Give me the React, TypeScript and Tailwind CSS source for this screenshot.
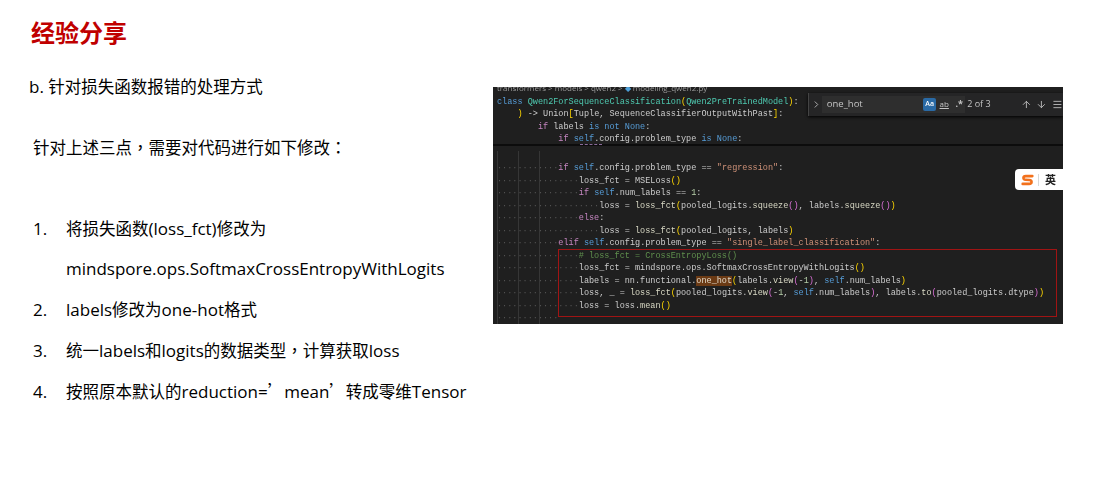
import {ArrowDown, ArrowUp, ChevronRight, Menu} from "lucide-react";
import type {ReactNode} from "react";

const textFont = "font-['Open_Sans','Noto_Sans_CJK_SC',sans-serif]";

const Kw = ({children}: { children: ReactNode }) => <span className="text-[#c586c0]">{children}</span>;
const Blue = ({children}: { children: ReactNode }) => <span className="text-[#569cd6]">{children}</span>;
const Cls = ({children}: { children: ReactNode }) => <span className="text-[#4ec9b0]">{children}</span>;
const Gold = ({children}: { children: ReactNode }) => <span className="text-[#ffd700]">{children}</span>;
const Pink = ({children}: { children: ReactNode }) => <span className="text-[#da70d6]">{children}</span>;
const Str = ({children}: { children: ReactNode }) => <span className="text-[#ce9178]">{children}</span>;
const Fn = ({children}: { children: ReactNode }) => <span className="text-[#d8d8c4]">{children}</span>;
const Num = ({children}: { children: ReactNode }) => <span className="text-[#b5cea8]">{children}</span>;

// latin runs are a touch larger than the CJK around them
const L = ({children}: { children: ReactNode }) => <span className="text-[17px]">{children}</span>;
// full-width punctuation sitting centred in its box
const P = ({children}: { children: ReactNode }) => <span className="font-['Noto_Sans_CJK_TC',sans-serif]">{children}</span>;
const Q = () => <span className="font-['Noto_Sans_CJK_SC',sans-serif]">’</span>;

// render-whitespace dots, one per column
const Dots = ({n}: { n: number }) => <span className="text-[#555555]">{"·".repeat(n)}</span>;

const CodeLine = ({indent = 0, dots = false, children}: { indent?: number; dots?: boolean; children: ReactNode }) => (
    <div className="h-[12.5px] whitespace-pre">
        {dots ? <Dots n={indent}/> : " ".repeat(indent)}
        {children}
    </div>
);

const CodePanel = () => (
    <div className="relative h-[237px] w-[570px] overflow-hidden bg-[#1f1f1f] font-['Liberation_Mono',monospace] text-[8.52px] leading-[12.5px] text-[#cccccc] blur-[0.4px]">
        {/* sticky scroll part */}
        <div className="h-[63px] border-b-2 border-[#0c0c0c] pl-[4px]">
            <div className="-mt-[4px] h-[9px] font-['Open_Sans',sans-serif] text-[8px] leading-[9px] text-[#9a9a9a]">
                transformers &gt; models &gt; qwen2 &gt; <span className="text-[#4d9fd8]">◆</span> modeling_qwen2.py
            </div>
            <div className="mt-[3.5px]">
                <CodeLine><Blue>class</Blue> <Cls>Qwen2ForSequenceClassification</Cls><Gold>(</Gold><Cls>Qwen2PreTrainedModel</Cls><Gold>)</Gold>:</CodeLine>
                <CodeLine indent={4}><Gold>)</Gold> -&gt; Union<Gold>[</Gold>Tuple, SequenceClassifierOutputWithPast<Gold>]</Gold>:</CodeLine>
                <CodeLine indent={8}><Kw>if</Kw> labels <Blue>is not None</Blue>:</CodeLine>
                <CodeLine indent={12}><Kw>if</Kw> <Blue>self</Blue>.config.problem_type <Blue>is None</Blue>:</CodeLine>
            </div>
        </div>
        {/* main editor */}
        <div className="mt-[16px] pl-[4px]">
            <CodeLine dots indent={12}><Kw>if</Kw> <Blue>self</Blue>.config.problem_type == <Str>"regression"</Str>:</CodeLine>
            <CodeLine dots indent={16}>loss_fct = MSELoss<Gold>()</Gold></CodeLine>
            <CodeLine dots indent={16}><Kw>if</Kw> <Blue>self</Blue>.num_labels == <Num>1</Num>:</CodeLine>
            <CodeLine dots indent={20}>loss = <Fn>loss_fct</Fn><Gold>(</Gold>pooled_logits.<Fn>squeeze</Fn><Pink>()</Pink>, labels.<Fn>squeeze</Fn><Pink>()</Pink><Gold>)</Gold></CodeLine>
            <CodeLine dots indent={16}><Kw>else</Kw>:</CodeLine>
            <CodeLine dots indent={20}>loss = <Fn>loss_fct</Fn><Gold>(</Gold>pooled_logits, labels<Gold>)</Gold></CodeLine>
            <CodeLine dots indent={12}><Kw>elif</Kw> <Blue>self</Blue>.config.problem_type == <Str>"single_label_classification"</Str>:</CodeLine>
            <CodeLine dots indent={16}><span className="text-[#5f8f4d]"># loss_fct = CrossEntropyLoss()</span></CodeLine>
            <CodeLine dots indent={16}>loss_fct = mindspore.ops.SoftmaxCrossEntropyWithLogits<Gold>()</Gold></CodeLine>
            <CodeLine dots indent={16}>labels = nn.functional.<span className="bg-[#6b3a14] text-[#e0d8c8]">one_hot</span><Gold>(</Gold>labels.<Fn>view</Fn><Pink>(</Pink>-<Num>1</Num><Pink>)</Pink>, <Blue>self</Blue>.num_labels<Gold>)</Gold></CodeLine>
            <CodeLine dots indent={16}>loss, _ = <Fn>loss_fct</Fn><Gold>(</Gold>pooled_logits.<Fn>view</Fn><Pink>(</Pink>-<Num>1</Num>, <Blue>self</Blue>.num_labels<Pink>)</Pink>, labels.<Fn>to</Fn><Pink>(</Pink>pooled_logits.dtype<Pink>)</Pink><Gold>)</Gold></CodeLine>
            <CodeLine dots indent={16}>loss = loss.<Fn>mean</Fn><Gold>()</Gold></CodeLine>
            <CodeLine dots indent={12}>{""}</CodeLine>
        </div>

        {/* problem squiggle under self */}
        <div className="absolute left-[87px] top-[57px] w-[22px] border-t border-dashed border-[#8a6a9a]"/>

        {/* indent guides */}
        <div className="absolute left-[4px] top-[64px] h-[173px] w-px bg-[#363636]"/>
        <div className="absolute left-[25px] top-[64px] h-[173px] w-px bg-[#363636]"/>
        <div className="absolute left-[46px] top-[64px] h-[173px] w-px bg-[#363636]"/>

        {/* red annotation box */}
        <div className="absolute left-[65px] top-[162px] h-[68px] w-[499px] border border-[#a01414]"/>

        {/* find widget */}
        <div className="absolute left-[315px] top-[6px] flex h-[23px] w-[255px] items-center whitespace-nowrap bg-[#252526] font-['Open_Sans',sans-serif] text-[#c4c4c4] shadow-[0_1px_3px_#000]">
            <div className="h-full w-[1px] bg-[#444444]"/>
            <ChevronRight className="ml-[2px] h-[11px] w-[11px] text-[#b8b8b8]"/>
            <div className="flex h-[17px] w-[146px] items-center bg-[#2e2e2e] pl-[5px] pr-[1px] text-[9.5px]">
                <span className="flex-1">one_hot</span>
                <span className="flex h-[13px] w-[13px] items-center justify-center rounded-[2px] bg-[#2a6aa5] text-[7px] font-semibold text-white">Aa</span>
                <span className="ml-[3px] w-[10px] text-center text-[8px] underline">ab</span>
                <span className="ml-[5px] w-[10px] text-center text-[9px] font-bold">.*</span>
            </div>
            <span className="ml-[2px] text-[9px]">2 of 3</span>
            <ArrowUp className="ml-[30px] h-[11px] w-[11px] text-[#bdbdbd]"/>
            <ArrowDown className="ml-[5px] h-[11px] w-[11px] text-[#bdbdbd]"/>
            <Menu className="ml-[5px] h-[11px] w-[11px] text-[#bdbdbd]"/>
        </div>

        {/* input method badge */}
        <div className="absolute right-0 top-[82px] flex h-[21px] w-[48px] items-center rounded-l-[4px] bg-white pl-[6px] font-['Noto_Sans_CJK_SC',sans-serif]">
            <svg viewBox="0 0 14 12" className="h-[12px] w-[13px]" fill="none" stroke="#f2711c" strokeWidth="2.8" strokeLinecap="round">
                <path d="M12.2 1.8H5.2C1.8 1.8 1.8 5.6 5 5.8L9 6C12.2 6.2 12.2 10.2 8.8 10.2H1.8"/>
            </svg>
            <div className="ml-[4px] h-[12px] w-px bg-[#d8d8d8]"/>
            <span className="ml-[6px] text-[11px] font-bold leading-none text-[#222222]">英</span>
        </div>
    </div>
);

const ListRow = ({num, children}: { num?: string; children: ReactNode }) => (
    <div className="flex h-[40.8px] items-center whitespace-nowrap">
        <span className="w-[33px] text-[17px]">{num}</span>
        <span>{children}</span>
    </div>
);

export default function App() {
    return (
        <div className={`flex h-[480px] w-[1097px] overflow-hidden bg-white ${textFont} text-[16.5px] text-black`}>
            <div className="w-[493px] shrink-0 pl-[30px]">
                <h1 className="ml-[1px] mt-[18px] h-[32px] font-['Liberation_Sans','Noto_Sans_CJK_SC',sans-serif] text-[24px] font-bold leading-[32px] text-[#c00000]">
                    经验分享
                </h1>
                <p className="-ml-[1px] mt-[25px] h-[24px] leading-[24px]"><L>b. </L>针对损失函数报错的处理方式</p>
                <p className="ml-[3px] mt-[36px] h-[24px] leading-[24px]">针对上述三点<P>，</P>需要对代码进行如下修改<P>：</P></p>
                <div className="ml-[3px] mt-[49px]">
                    <ListRow num="1.">将损失函数<L>(loss_fct)</L>修改为</ListRow>
                    <ListRow><L>mindspore.ops.SoftmaxCrossEntropyWithLogits</L></ListRow>
                    <ListRow num="2."><L>labels</L>修改为<L>one-hot</L>格式</ListRow>
                    <ListRow num="3.">统一<L>labels</L>和<L>logits</L>的数据类型<P>，</P>计算获取<L>loss</L></ListRow>
                    <ListRow num="4.">按照原本默认的<L>reduction=</L><Q/><L>mean</L><Q/>转成零维<L>Tensor</L></ListRow>
                </div>
            </div>
            <div className="pt-[87px]">
                <CodePanel/>
            </div>
        </div>
    );
}
